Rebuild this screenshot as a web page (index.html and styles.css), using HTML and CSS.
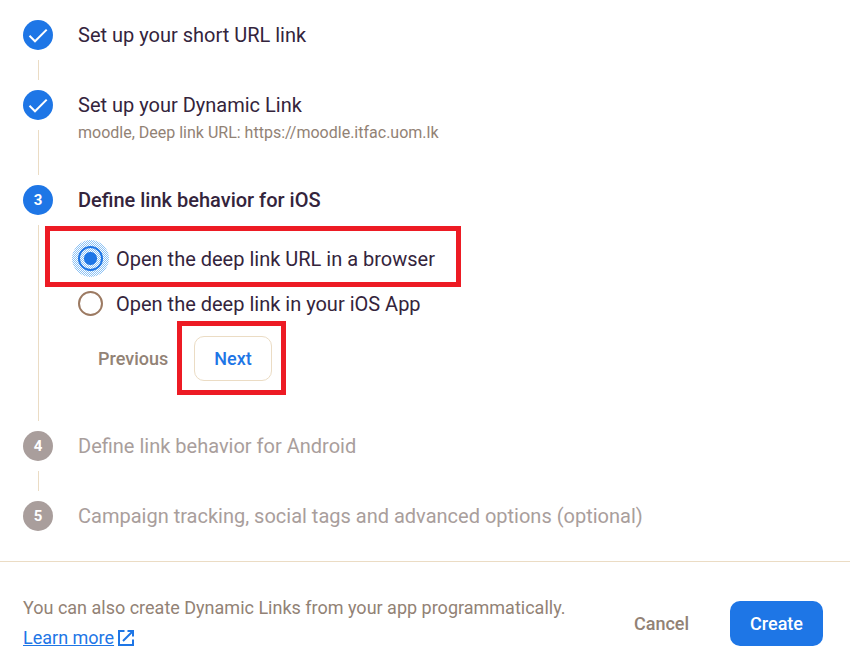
FILE: index.html
```html
<!DOCTYPE html>
<html lang="en">
<head>
<meta charset="utf-8">
<title>Create a Dynamic Link</title>
<link rel="stylesheet" href="styles.css">
</head>
<body>
<form class="wizard">
  <ol class="steps">
    <li class="step">
      <div class="rail">
        <span class="marker"><svg viewBox="0 0 30 30" aria-hidden="true"><path d="M6.500 15.800 L12 21.300 L23.700 9.600"/></svg></span>
        <span class="line"></span>
      </div>
      <div class="content"><h2 class="title">Set up your short URL link</h2></div>
    </li>
    <li class="step">
      <div class="rail">
        <span class="marker"><svg viewBox="0 0 30 30" aria-hidden="true"><path d="M6.500 15.800 L12 21.300 L23.700 9.600"/></svg></span>
        <span class="line"></span>
      </div>
      <div class="content summarized">
        <h2 class="title">Set up your Dynamic Link</h2>
        <p class="summary">moodle, Deep link URL: https://moodle.itfac.uom.lk</p>
      </div>
    </li>
    <li class="step">
      <div class="rail"><span class="marker">3</span><span class="line"></span></div>
      <div class="content expanded">
        <h2 class="title current">Define link behavior for iOS</h2>
        <div class="options">
          <div class="option highlighted">
            <input type="radio" name="ios" id="ios-browser" checked>
            <label for="ios-browser">Open the deep link URL in a browser</label>
          </div>
          <div class="option">
            <input type="radio" name="ios" id="ios-app">
            <label for="ios-app">Open the deep link in your iOS App</label>
          </div>
        </div>
        <div class="actions">
          <button type="button" class="button text">Previous</button>
          <span class="next-wrap"><button type="button" class="button outlined">Next</button></span>
        </div>
      </div>
    </li>
    <li class="step pending">
      <div class="rail"><span class="marker">4</span><span class="line"></span></div>
      <div class="content"><h2 class="title">Define link behavior for Android</h2></div>
    </li>
    <li class="step pending">
      <div class="rail"><span class="marker">5</span></div>
      <div class="content"><h2 class="title">Campaign tracking, social tags and advanced options (optional)</h2></div>
    </li>
  </ol>
  <footer class="footer">
    <p class="hint">You can also create Dynamic Links from your app programmatically.<br>
      <a class="learn" href="#"><span>Learn more</span><svg viewBox="0 0 16 16" aria-hidden="true"><path d="M6.500 1H1v14h14V9.500M9.500 1H15v5.500M15 1L5 11"/></svg></a>
    </p>
    <div class="footer-actions">
      <button type="button" class="button text">Cancel</button>
      <button type="submit" class="button primary">Create</button>
    </div>
  </footer>
</form>
</body>
</html>
```
FILE: styles.css
```css
*,
*::before,
*::after { box-sizing: border-box; }

body {
  margin: 0;
  background: #fff;
  color: #34243c;
  font-family: Roboto, "Liberation Sans", sans-serif;
  font-size: 20px;
  line-height: 30px;
}

.steps {
  margin: 0;
  padding: 20px 23px 30px;
  list-style: none;
}

.step { display: flex; gap: 25px; }

.rail {
  display: flex;
  flex: none;
  flex-direction: column;
  align-items: center;
  width: 30px;
}

.marker {
  display: block;
  width: 30px;
  height: 30px;
  border-radius: 50%;
  background: #1e76e6;
  color: #fff;
  font-size: 15px;
  font-weight: 700;
  text-align: center;
}

.marker svg {
  display: block;
  fill: none;
  stroke: #fff;
  stroke-width: 2;
}

.line {
  flex: 1;
  width: 1px;
  min-height: 20px;
  margin: 10px 0;
  background: #ebdcc4;
}

.content { flex: 1; }
.summarized { padding-bottom: 40px; }
.expanded { padding-bottom: 50px; }

.title {
  margin: 0;
  font-size: 20px;
  font-weight: 400;
}

.title.current { font-weight: 500; }

.summary {
  margin: 0;
  color: #928275;
  font-size: 16px;
  line-height: 25px;
}

.pending .marker { background: #a99e9c; }
.pending .title { color: #a99e9c; }

.options { margin-top: 21px; }

.option {
  position: relative;
  display: flex;
  align-items: center;
  gap: 13px;
  height: 45px;
}

.option input {
  position: relative;
  appearance: none;
  width: 25px;
  height: 25px;
  margin: 0;
  border: 2px solid #9c7a62;
  border-radius: 50%;
}

.option input:checked {
  border-color: #1e76e6;
  background: radial-gradient(circle, #1e76e6 6px, transparent 7px);
}

.option input:checked::before {
  content: "";
  position: absolute;
  inset: -8px;
  z-index: -1;
  border-radius: 50%;
  background: repeating-conic-gradient(#8cc2f4 0 25%, #fff 0 50%) 0 0 / 2px 2px;
}

.highlighted::after,
.next-wrap::after {
  content: "";
  position: absolute;
  border: 5px solid #ed1b24;
  pointer-events: none;
}

.highlighted::after {
  top: -10px;
  left: -33px;
  width: 416px;
  height: 61px;
}

.actions {
  display: flex;
  gap: 6px;
  margin-top: 10px;
}

.next-wrap { position: relative; }
.next-wrap::after { inset: -15px -14px -14px -17px; }

.button {
  display: block;
  height: 45px;
  padding: 0 20px;
  border: 0;
  border-radius: 10px;
  background: transparent;
  font-family: inherit;
  font-size: 18px;
  font-weight: 500;
}

.button.text { color: #928275; }

.button.outlined {
  padding: 0 19px;
  border: 1px solid #ebdcc4;
  color: #1e76e6;
}

.button.primary {
  background: #1e76e6;
  color: #fff;
}

.footer {
  display: flex;
  align-items: center;
  justify-content: space-between;
  padding: 31px 27px 13px 23px;
  border-top: 1px solid #ebdcc4;
}

.hint {
  margin: 0;
  color: #928275;
  font-size: 18px;
}

.learn {
  display: inline-flex;
  align-items: center;
  gap: 4px;
  color: #1e76e6;
  text-decoration: none;
}

.learn span { text-decoration: underline; }

.learn svg {
  width: 16px;
  height: 16px;
  fill: none;
  stroke: currentColor;
  stroke-width: 2;
}

.footer-actions { display: flex; gap: 21px; }
```
